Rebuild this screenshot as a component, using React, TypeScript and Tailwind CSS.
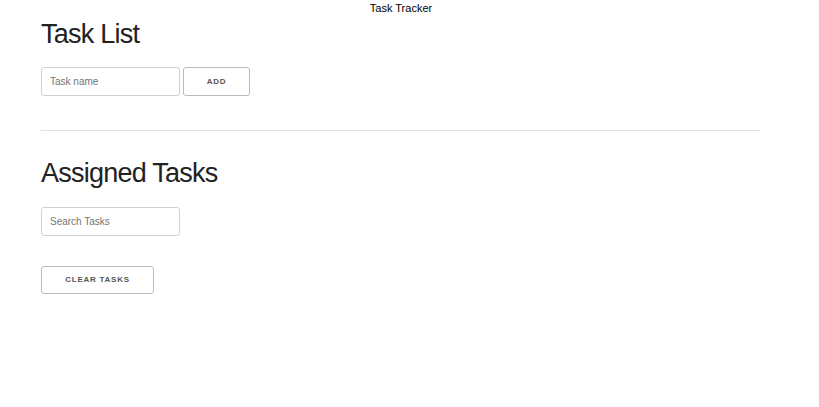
export default function App() {
  return (
    <div className="w-[802px] bg-white font-['Liberation_Sans',Arial,sans-serif] text-[#222]">
      {/* page title */}
      <div className="h-[16px] text-center text-[11px] leading-[16px] text-black">
        Task Tracker
      </div>

      <div className="pl-[41px] pr-[42px]">
        <h2 className="mt-[2px] text-[27px] leading-[32px] tracking-[-0.75px] font-normal">
          Task List
        </h2>

        <div className="mt-[17px] flex gap-[3px]">
          <input
            type="text"
            placeholder="Task name"
            className="h-[29px] w-[139px] rounded-[3px] border border-[#d1d1d1] bg-white px-[8px] text-[10px] text-[#222] outline-none placeholder:text-[#757575]"
          />
          <button className="h-[29px] w-[67px] rounded-[3px] border border-[#bbb] bg-transparent text-[8px] font-semibold uppercase tracking-[0.75px] text-[#555]">
            Add
          </button>
        </div>

        <hr className="mt-[34px] border-0 border-t border-[#e1e1e1]" />

        <h2 className="mt-[26px] text-[27px] leading-[32px] tracking-[-0.75px] font-normal">
          Assigned Tasks
        </h2>

        <div className="mt-[18px]">
          <input
            type="text"
            placeholder="Search Tasks"
            className="h-[29px] w-[139px] rounded-[3px] border border-[#d1d1d1] bg-white px-[8px] text-[10px] text-[#222] outline-none placeholder:text-[#757575]"
          />
        </div>

        <div className="mt-[29px] pb-[113px]">
          <button className="h-[28px] w-[113px] rounded-[3px] border border-[#bbb] bg-transparent text-[8px] font-semibold uppercase tracking-[0.75px] text-[#555]">
            Clear Tasks
          </button>
        </div>
      </div>
    </div>
  );
}
